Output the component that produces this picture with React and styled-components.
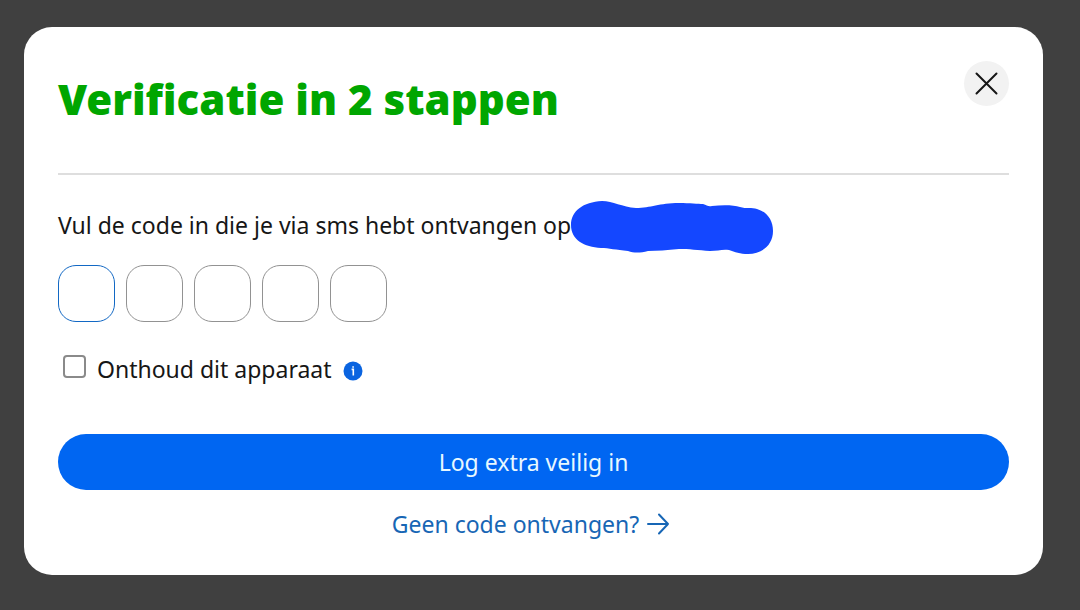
import styled, { createGlobalStyle } from 'styled-components'
import { useRef, useState } from 'react'

const CODE_LENGTH = 5

function App() {
  const [code, setCode] = useState(Array(CODE_LENGTH).fill(''))
  const [remember, setRemember] = useState(false)
  const inputs = useRef([])

  const handleDigit = (index, value) => {
    const digit = value.replace(/\D/g, '').slice(-1)
    setCode(code.map((current, i) => (i === index ? digit : current)))

    if (digit && index < CODE_LENGTH - 1) {
      inputs.current[index + 1].focus()
    }
  }

  return (
    <Overlay>
      <GlobalStyle />
      <Dialog role='dialog' aria-labelledby='dialog-title'>
        <Header>
          <Title id='dialog-title'>Verificatie in 2 stappen</Title>
          <CloseButton type='button' aria-label='Sluiten'>
            <svg width='24' height='24' viewBox='0 0 24 24'>
              <path d='M1.5 1.5 21.5 21.5M21.5 1.5 1.5 21.5' />
            </svg>
          </CloseButton>
        </Header>
        <Form onSubmit={(e) => e.preventDefault()}>
          <Intro>
            <span>Vul de code in die je via sms hebt ontvangen op</span>
            <HiddenNumber viewBox='0 0 202 54' aria-hidden='true'>
              <path d='M0 24C0 10 12 1 31 0C42 0 51 6 65 7C80 7 88 2 108 2C119 2 127 3 132 3C136 4 137 6 141 5C151 4 163 4 169 6C175 8 181 6 186 8C196 11 202 19 202 30C202 44 191 53 177 53C169 53 164 51 158 49C151 48 147 50 139 50C127 49 118 48 108 48C96 49 86 50 77 50C69 52 63 52 57 50C45 49 38 47 30 47C13 46 0 39 0 24Z' />
            </HiddenNumber>
          </Intro>
          <CodeFields>
            {code.map((digit, i) => (
              <CodeInput
                key={i}
                ref={(el) => { inputs.current[i] = el }}
                $active={i === 0}
                inputMode='numeric'
                aria-label={`Cijfer ${i + 1}`}
                value={digit}
                onChange={(e) => handleDigit(i, e.target.value)}
              />
            ))}
          </CodeFields>
          <RememberRow>
            <Checkbox
              id='remember'
              type='checkbox'
              checked={remember}
              onChange={(e) => setRemember(e.target.checked)}
            />
            <label htmlFor='remember'>Onthoud dit apparaat</label>
            <InfoButton type='button' aria-label='Meer informatie'>
              <svg width='20' height='20' viewBox='0 0 20 20'>
                <circle cx='10' cy='10' r='9.5' />
                <path d='M8.6 8.4H10.3V14.5M10.1 5.2V6.8' />
              </svg>
            </InfoButton>
          </RememberRow>
          <SubmitButton type='submit'>Log extra veilig in</SubmitButton>
        </Form>
        <HelpLink href='#'>
          Geen code ontvangen?
          <svg width='28' height='24' viewBox='0 0 28 24'>
            <path d='M1 12H21M12 2.5 21 12 12 21.5' />
          </svg>
        </HelpLink>
      </Dialog>
    </Overlay>
  )
}

const GlobalStyle = createGlobalStyle`
  * {
    box-sizing: border-box;
  }

  body {
    margin: 0;
    background: #404040;
    color: #161616;
    font-family: 'Noto Sans', sans-serif;
    font-size: 23px;
    line-height: 32px;
  }

  button, input {
    font: inherit;
  }
`

const Overlay = styled.div`
  min-height: 100vh;
  padding: 27px 37px 35px 24px;
`

const Dialog = styled.main`
  background: white;
  border-radius: 28px;
  padding: 34px 34px 35px;
`

const Header = styled.header`
  display: flex;
  justify-content: space-between;
  align-items: flex-start;
  padding-bottom: 46px;
  border-bottom: 2px solid #dedede;
`

const Title = styled.h1`
  margin: 10px 0 0;
  color: #00a600;
  font-size: 42px;
  font-weight: 900;
  line-height: 56px;
`

const CloseButton = styled.button`
  display: flex;
  align-items: center;
  justify-content: center;
  width: 45px;
  height: 45px;
  padding: 0;
  border: none;
  border-radius: 50%;
  background: #f2f2f2;

  svg {
    fill: none;
    stroke: #161616;
    stroke-width: 2;
    stroke-linecap: round;
  }
`

const Form = styled.form`
  display: flex;
  flex-direction: column;
`

const Intro = styled.div`
  display: flex;
  align-items: flex-start;
  margin-top: 26px;
  line-height: 48px;
`

const HiddenNumber = styled.svg`
  flex: none;
  width: 202px;
  height: 54px;
  fill: #1447ff;
`

const CodeFields = styled.div`
  display: flex;
  gap: 11px;
  margin-top: 10px;
`

const CodeInput = styled.input`
  width: 57px;
  height: 57px;
  padding: 0;
  border: 1px solid ${({ $active }) => ($active ? '#1268c4' : '#929292')};
  border-radius: 18px;
  background: white;
  text-align: center;
  outline: none;
`

const RememberRow = styled.div`
  display: flex;
  align-items: center;
  gap: 11px;
  margin-top: 31px;
  padding-left: 5px;
`

const Checkbox = styled.input`
  appearance: none;
  width: 23px;
  height: 23px;
  margin: 0 0 6px;
  border: 2px solid #8a8a8a;
  border-radius: 4px;

  &:checked {
    background: #0066f2;
  }
`

const InfoButton = styled.button`
  display: flex;
  margin-top: 4px;
  padding: 0;
  border: none;
  background: none;

  circle {
    fill: #0a64e0;
  }

  path {
    fill: none;
    stroke: white;
    stroke-width: 1.6;
  }
`

const SubmitButton = styled.button`
  height: 56px;
  margin-top: 49px;
  border: none;
  border-radius: 28px;
  background: #0066f2;
  color: #e8f8ff;
`

const HelpLink = styled.a`
  display: flex;
  align-items: center;
  justify-content: center;
  gap: 8px;
  margin-top: 18px;
  color: #1766b5;
  text-decoration: none;

  svg {
    fill: none;
    stroke: currentColor;
    stroke-width: 2;
    stroke-linecap: round;
    stroke-linejoin: round;
  }
`

export default App
